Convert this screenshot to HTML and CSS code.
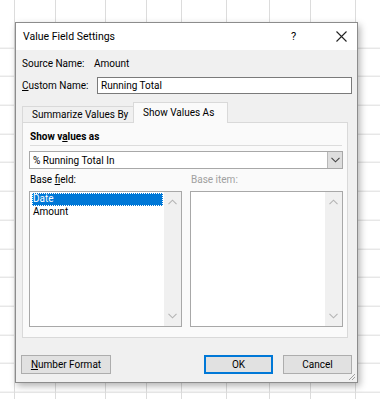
FILE: index.html
```html
<!DOCTYPE html>
<html lang="en">
<head>
  <meta charset="UTF-8">
  <title>Value Field Settings</title>
  <link rel="stylesheet" href="styles.css">
</head>
<body>

<div class="sheet">
  <div class="col" style="width: 14px"></div>
  <div class="col" style="width: 40px"></div>
  <div class="col" style="width: 49px"></div>
  <div class="col" style="width: 40px"></div>
  <div class="col" style="width: 34px"></div>
  <div class="col" style="width: 44px"></div>
  <div class="col" style="width: 42px"></div>
  <div class="col" style="width: 40px"></div>
  <div class="col" style="width: 44px"></div>
  <div class="col" style="width: 44px"></div>
</div>

<div class="dialog">
  <div class="titlebar">
    <span class="title">Value Field Settings</span>
    <span class="help">?</span>
    <svg class="close" width="11" height="11" viewBox="0 0 11 11">
      <path d="M0.5 0.5 L10.5 10.5 M10.5 0.5 L0.5 10.5" stroke="#222" stroke-width="1.1" fill="none"/>
    </svg>
  </div>

  <div class="body">
    <div class="row source">
      <span class="label">Source Name:</span>
      <span>Amount</span>
    </div>
    <div class="row custom">
      <span class="label"><u>C</u>ustom Name:</span>
      <div class="textbox">Running Total</div>
    </div>

    <div class="tabs">
      <div class="tab">Summarize Values By</div>
      <div class="tab active">Show Values As</div>
    </div>

    <div class="panel">
      <div class="group-title">Show v<u>a</u>lues as</div>
      <div class="separator"></div>
      <div class="select">
        <span class="select-text">% Running Total In</span>
        <span class="select-btn">
          <svg width="9" height="6" viewBox="0 0 9 6"><path d="M0.5 0.8 L4.5 4.8 L8.5 0.8" stroke="#444" stroke-width="1.1" fill="none"/></svg>
        </span>
      </div>

      <div class="lists">
        <div class="list-group">
          <div class="list-label">Base <u>f</u>ield:</div>
          <div class="listbox">
            <div class="items">
              <div class="item selected">Date</div>
              <div class="item">Amount</div>
            </div>
            <div class="scrollbar">
              <svg width="9" height="6" viewBox="0 0 9 6"><path d="M0.5 5.2 L4.5 1.2 L8.5 5.2" stroke="#b4b4b4" stroke-width="1.1" fill="none"/></svg>
              <svg width="9" height="6" viewBox="0 0 9 6"><path d="M0.5 0.8 L4.5 4.8 L8.5 0.8" stroke="#b4b4b4" stroke-width="1.1" fill="none"/></svg>
            </div>
          </div>
        </div>
        <div class="list-group">
          <div class="list-label disabled">Base item:</div>
          <div class="listbox">
            <div class="items"></div>
            <div class="scrollbar">
              <svg width="9" height="6" viewBox="0 0 9 6"><path d="M0.5 5.2 L4.5 1.2 L8.5 5.2" stroke="#b4b4b4" stroke-width="1.1" fill="none"/></svg>
              <svg width="9" height="6" viewBox="0 0 9 6"><path d="M0.5 0.8 L4.5 4.8 L8.5 0.8" stroke="#b4b4b4" stroke-width="1.1" fill="none"/></svg>
            </div>
          </div>
        </div>
      </div>
    </div>

    <div class="buttons">
      <button class="btn wide"><u>N</u>umber Format</button>
      <span class="spacer"></span>
      <button class="btn default">OK</button>
      <button class="btn">Cancel</button>
    </div>
  </div>

  <svg class="grip" width="8" height="8" viewBox="0 0 8 8">
    <path d="M7 1 L1 7 M7 4 L4 7" stroke="#a0a0a0" stroke-width="1" fill="none"/>
  </svg>
</div>

</body>
</html>
```

FILE: styles.css
```css
body, html {
  margin: 0;
  padding: 0;
  height: 100%;
  overflow: hidden;
  font-family: Roboto, "Noto Sans", sans-serif;
  font-size: 10px;
  color: #000;
  white-space: nowrap;
}

.sheet {
  display: flex;
  height: 100%;
  overflow: hidden;
  background-color: #fff;
  background-image: repeating-linear-gradient(to bottom, transparent 0, transparent 27.7px, #dcdcdc 27.7px, #dcdcdc 28.7px);
  background-position: 0 19.7px;
}

.col {
  flex: none;
  border-right: 1px solid #dcdcdc;
}

.dialog {
  position: absolute;
  left: 15px;
  top: 22px;
  width: 341px;
  height: 359px;
  border: 1px solid #8c8c8c;
  background-color: #f0f0f0;
  box-shadow: 2px 3px 7px rgba(0, 0, 0, 0.3);
  display: flex;
  flex-direction: column;
}

.titlebar {
  flex: none;
  height: 27px;
  background-color: #fff;
  display: flex;
  align-items: center;
  padding-left: 7px;
  font-size: 10.5px;
}

.title {
  flex: 1;
}

.help {
  width: 12px;
  margin-right: 33px;
  font-size: 11px;
}

.close {
  margin-right: 10px;
}

.body {
  flex: 1;
  display: flex;
  flex-direction: column;
  padding: 0 5px 0 6px;
}

.row {
  display: flex;
  align-items: center;
}

.label {
  flex: none;
}

.source {
  height: 16px;
  margin-top: 5px;
}

.source .label {
  width: 72px;
}

.custom {
  margin-top: 6px;
}

.custom .label {
  width: 75px;
}

.textbox {
  flex: 1;
  height: 15px;
  line-height: 15px;
  border: 1px solid #7a7a7a;
  background-color: #fff;
  padding-left: 3px;
}

.tabs {
  display: flex;
  align-items: flex-end;
  margin-top: 8px;
  height: 20px;
}

.tab {
  height: 16px;
  line-height: 15px;
  padding: 0 5px 0 9px;
  border: 1px solid #d9d9d9;
  border-bottom: none;
  border-right: none;
  box-sizing: border-box;
  width: 111px;
  overflow: hidden;
}

.tab.active {
  height: 21px;
  width: 95px;
  padding-left: 9px;
  line-height: 19px;
  background-color: #fafafa;
  border-right: 1px solid #d9d9d9;
  margin-bottom: -1px;
  position: relative;
  z-index: 1;
}

.panel {
  width: 326px;
  height: 216px;
  box-sizing: border-box;
  border: 1px solid #d9d9d9;
  background-color: #fafafa;
  padding: 6px 4px 0 6px;
}

.group-title {
  font-weight: bold;
  padding-left: 1px;
  height: 16px;
  line-height: 16px;
}

.separator {
  height: 1px;
  background-color: #dcdcdc;
  margin: 0 0 5px 1px;
  width: 312px;
}

.select {
  display: flex;
  align-items: center;
  height: 18px;
  box-sizing: border-box;
  border: 1px solid #a8a8a8;
  background-color: #fff;
}

.select-text {
  flex: 1;
  padding-left: 3px;
}

.select-btn {
  width: 14px;
  height: 16px;
  background-color: #dedede;
  border-left: 1px solid #b8b8b8;
  display: flex;
  align-items: center;
  justify-content: center;
}

.lists {
  display: flex;
  gap: 8px;
  margin-top: 4px;
}

.list-group {
  width: 154px;
}

.list-label {
  height: 14px;
  line-height: 14px;
  padding-left: 1px;
  margin-bottom: 4px;
}

.list-label.disabled {
  color: #a0a0a0;
}

.listbox {
  display: flex;
  height: 136px;
  box-sizing: border-box;
  border: 1px solid #a8a8a8;
  background-color: #fff;
}

.items {
  flex: 1;
  padding: 1px 1px 0 2px;
}

.item {
  height: 12.5px;
  line-height: 12.5px;
  padding-left: 1px;
}

.item.selected {
  background-color: #0078d7;
  color: #fff;
  outline: 1px dotted #fff;
  outline-offset: -1px;
}

.scrollbar {
  width: 17px;
  background-color: #f0f0f0;
  display: flex;
  flex-direction: column;
  justify-content: space-between;
  align-items: center;
  padding: 7px 0 7px;
}

.buttons {
  display: flex;
  margin-top: 17px;
}

.spacer {
  flex: 1;
}

.btn {
  font-family: inherit;
  font-size: 10px;
  height: 19px;
  width: 69px;
  padding: 0;
  margin: 0 0 0 10px;
  background-color: #e1e1e1;
  border: 1px solid #adadad;
  color: #000;
}

.btn.wide {
  width: 90px;
  margin-left: -1px;
}

.btn.default {
  border: 2px solid #0078d7;
  margin-left: 0;
}

.grip {
  position: absolute;
  right: 1px;
  bottom: 1px;
}
```
